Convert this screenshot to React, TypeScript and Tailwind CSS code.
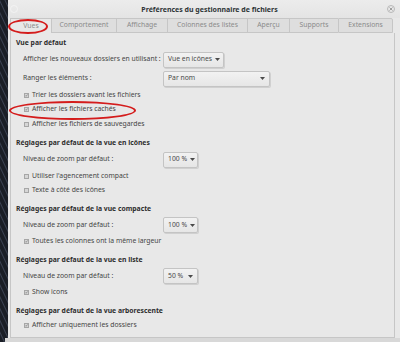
import React from 'react';

const font = "font-['Noto_Sans',sans-serif]";

const tabs = ['Vues', 'Comportement', 'Affichage', 'Colonnes des listes', 'Aperçu', 'Supports', 'Extensions'];
const tabWidths = ['w-[41px]', 'w-[65px]', 'w-[51px]', 'w-[80px]', 'w-[42px]', 'w-[49px]', 'w-[55px]'];

const Caret = () => (
  <svg width="5" height="3" viewBox="0 0 5 3" className="shrink-0">
    <path d="M0 0h5L2.5 3z" fill="#4a4a4a" />
  </svg>
);

const Dropdown = ({ label, width }: { label: string; width: string }) => (
  <div
    className={`${width} h-[16px] shrink-0 whitespace-nowrap flex items-center justify-between gap-[3px] pl-[4px] pr-[4px] rounded-[2px] border border-[#c4c4c4] bg-gradient-to-b from-[#f2f2f2] to-[#e6e6e6] shadow-[1px_1px_0_#d0d0d0] text-[#4a4a4a]`}
  >
    <span>{label}</span>
    <Caret />
  </div>
);

const CheckBox = ({ checked }: { checked?: boolean }) => (
  <span className="w-[5px] h-[5px] border border-[#a6a6a6] bg-[#d6d6d6] flex items-center justify-center shrink-0">
    {checked && (
      <svg width="5" height="5" viewBox="0 0 5 5">
        <path d="M0.6 2.6l1.2 1.2L4.4 0.8" stroke="#666" strokeWidth="1" fill="none" />
      </svg>
    )}
  </span>
);

const Heading = ({ children, first }: { children: React.ReactNode; first?: boolean }) => (
  <div className={`h-[14px] flex items-center pl-[5px] font-bold text-[#2e2e2e] whitespace-nowrap ${first ? '' : 'mt-[5px]'}`}>{children}</div>
);

const Row = ({ label, children, h }: { label: string; children: React.ReactNode; h: string }) => (
  <div className={`${h} flex items-center pl-[12px] whitespace-nowrap`}>
    <span className="w-[140px] shrink-0 text-[#444]">{label}</span>
    {children}
  </div>
);

const Check = ({ label, checked, h = 'h-[14px]' }: { label: string; checked?: boolean; h?: string }) => (
  <div className={`${h} flex items-center gap-[3px] pl-[13px] text-[#444] whitespace-nowrap`}>
    <CheckBox checked={checked} />
    <span>{label}</span>
  </div>
);

export default function App() {
  return (
    <div className={`relative w-[400px] h-[342px] overflow-hidden flex ${font} text-[6.8px] leading-none`}>
      <div className="w-[8px] h-full bg-[repeating-linear-gradient(65deg,#1a1e26_0px,#1a1e26_3px,#3b4252_4px,#1a1e26_5px)]" />
      <div className="flex-1 flex flex-col bg-[#d6d6d6]">
        {/* title bar */}
        <div className="h-[18px] flex items-center justify-between bg-gradient-to-b from-[#ececec] to-[#e4e4e4] pl-[2px] pr-[5px]">
          <span className="w-[8px] h-[8px] rounded-full border border-[#f6f6f6] opacity-70" />
          <span className="font-bold text-[#2e3436] text-[7px] ml-[14px] whitespace-nowrap">Préférences du gestionnaire de fichiers</span>
          <span className="w-[8px] h-[8px] rounded-full border border-[#b8b8b8] flex items-center justify-center">
            <svg width="4" height="4" viewBox="0 0 4 4">
              <path d="M0.5 0.5l3 3M3.5 0.5l-3 3" stroke="#8a8a8a" strokeWidth="0.8" />
            </svg>
          </span>
        </div>
        <div className="flex-1 flex flex-col pl-[2px] pr-[5px] bg-[#e8e8e8]">
          {/* tabs */}
          <div className="h-[15px] flex">
            {tabs.map((t, i) => (
              <div
                key={t}
                className={`${tabWidths[i]} whitespace-nowrap flex items-center justify-center text-[#8a8a8a] border-t border-[#c6c6c6] ${
                  i === 0
                    ? 'bg-[#e8e8e8] border-l'
                    : 'bg-[#dedede] border-l border-b'
                } ${i === tabs.length - 1 ? 'border-r rounded-tr-[2px]' : ''}`}
              >
                {t}
              </div>
            ))}
          </div>
          {/* page */}
          <div className="flex-1 flex flex-col border-l border-r border-b border-[#c6c6c6] bg-[#e8e8e8] pt-[3px]">
            <Heading first>Vue par défaut</Heading>
            <Row label="Afficher les nouveaux dossiers en utilisant :" h="h-[19px]">
              <Dropdown label="Vue en icônes" width="w-[61px]" />
            </Row>
            <Row label="Ranger les éléments :" h="h-[19px]">
              <Dropdown label="Par nom" width="w-[107px]" />
            </Row>
            <Check label="Trier les dossiers avant les fichiers" checked />
            <Check label="Afficher les fichiers cachés" checked h="h-[15px]" />
            <Check label="Afficher les fichiers de sauvegardes" />

            <Heading>Réglages par défaut de la vue en icônes</Heading>
            <Row label="Niveau de zoom par défaut :" h="h-[19px]">
              <Dropdown label="100 %" width="w-[35px]" />
            </Row>
            <Check label="Utiliser l'agencement compact" />
            <Check label="Texte à côté des icônes" />

            <Heading>Réglages par défaut de la vue compacte</Heading>
            <Row label="Niveau de zoom par défaut :" h="h-[18px]">
              <Dropdown label="100 %" width="w-[35px]" />
            </Row>
            <Check label="Toutes les colonnes ont la même largeur" checked />

            <Heading>Réglages par défaut de la vue en liste</Heading>
            <Row label="Niveau de zoom par défaut :" h="h-[18px]">
              <Dropdown label="50 %" width="w-[35px]" />
            </Row>
            <Check label="Show icons" checked />

            <Heading>Réglages par défaut de la vue arborescente</Heading>
            <Check label="Afficher uniquement les dossiers" checked />
          </div>
          <div className="h-[4px] bg-[#d8d8d8] -mx-[5px]" />
        </div>
      </div>
      {/* red annotations */}
      <div className="absolute left-[8px] top-[19px] w-[40px] h-[15px] rounded-[50%] border-2 border-[#d41c1c]" />
      <div className="absolute left-[9px] top-[101px] w-[127px] h-[19px] rounded-[50%] border-2 border-[#d41c1c]" />
    </div>
  );
}
